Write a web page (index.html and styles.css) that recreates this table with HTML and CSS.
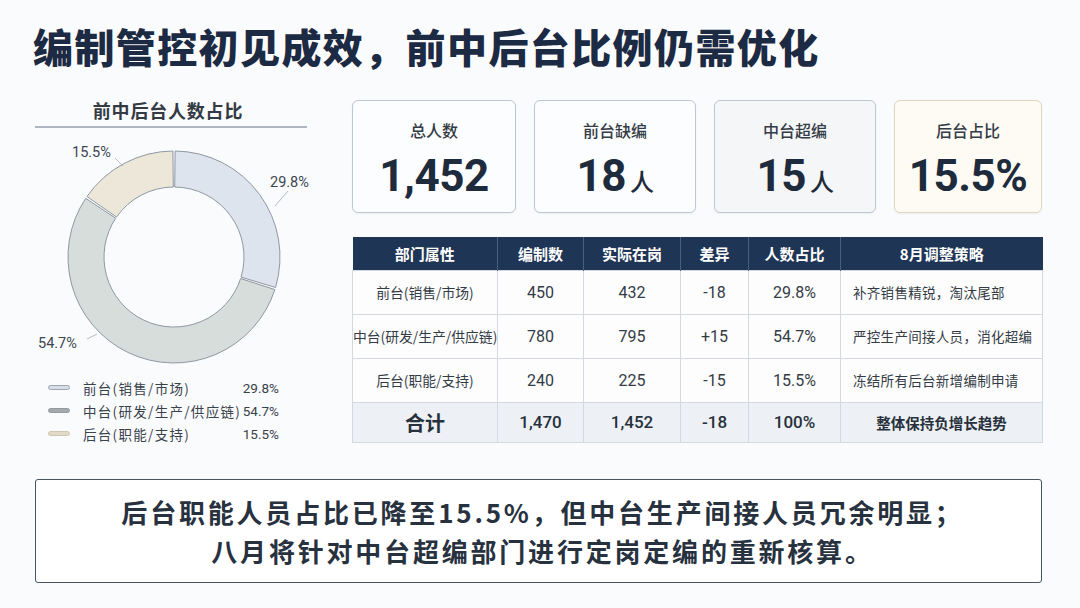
FILE: index.html
```html
<!DOCTYPE html>
<html lang="zh-CN">
<head>
<meta charset="utf-8">
<title>编制管控初见成效</title>
<link rel="stylesheet" href="styles.css">
</head>
<body>
<div class="page">
  <h1 class="title">编制管控初见成效，前中后台比例仍需优化</h1>
  <div class="main">
    <section class="chart-col">
      <div class="chart-title">前中后台人数占比</div>
      <svg class="donut" width="300" height="248" viewBox="0 0 300 248">
        <path class="seg seg-front" d="M140.11 23 A106 106 0 0 1 240.53 159.46 L206.05 149.12 A70 70 0 0 0 139.73 59 Z"/>
        <path class="seg seg-mid" d="M239.87 161.58 A106 106 0 1 1 50.71 70.34 L80.70 90.26 A70 70 0 1 0 205.61 150.52 Z"/>
        <path class="seg seg-back" d="M51.96 68.5 A106 106 0 0 1 137.89 23 L138.27 59 A70 70 0 0 0 81.52 89.05 Z"/>
        <line class="leader" x1="80" y1="30" x2="88" y2="38"/>
        <line class="leader" x1="240" y1="78" x2="253" y2="63"/>
        <line class="leader" x1="52" y1="211" x2="62" y2="206"/>
        <text class="plabel" x="37" y="29">15.5%</text>
        <text class="plabel" x="235" y="59">29.8%</text>
        <text class="plabel" x="3" y="220">54.7%</text>
      </svg>
      <ul class="legend">
        <li><span class="sw sw-front"></span><span class="lg-name">前台(销售/市场)</span><span class="lg-val">29.8%</span></li>
        <li><span class="sw sw-mid"></span><span class="lg-name">中台(研发/生产/供应链)</span><span class="lg-val">54.7%</span></li>
        <li><span class="sw sw-back"></span><span class="lg-name">后台(职能/支持)</span><span class="lg-val">15.5%</span></li>
      </ul>
    </section>
    <section class="data-col">
      <div class="cards">
        <div class="card"><div class="card-label">总人数</div><div class="card-value">1,452</div></div>
        <div class="card"><div class="card-label">前台缺编</div><div class="card-value">18<span class="unit">人</span></div></div>
        <div class="card card-grey"><div class="card-label">中台超编</div><div class="card-value">15<span class="unit">人</span></div></div>
        <div class="card card-cream"><div class="card-label">后台占比</div><div class="card-value">15.5%</div></div>
      </div>
      <table class="tbl">
        <colgroup>
          <col class="w1"><col class="w2"><col class="w3"><col class="w4"><col class="w5"><col class="w6">
        </colgroup>
        <thead>
          <tr><th>部门属性</th><th>编制数</th><th>实际在岗</th><th>差异</th><th>人数占比</th><th>8月调整策略</th></tr>
        </thead>
        <tbody>
          <tr><td>前台(销售/市场)</td><td>450</td><td>432</td><td>-18</td><td>29.8%</td><td class="strat">补齐销售精锐，淘汰尾部</td></tr>
          <tr><td>中台(研发/生产/供应链)</td><td>780</td><td>795</td><td>+15</td><td>54.7%</td><td class="strat">严控生产间接人员，消化超编</td></tr>
          <tr><td>后台(职能/支持)</td><td>240</td><td>225</td><td>-15</td><td>15.5%</td><td class="strat">冻结所有后台新增编制申请</td></tr>
          <tr class="total"><td class="total-name">合计</td><td>1,470</td><td>1,452</td><td>-18</td><td>100%</td><td class="total-strat">整体保持负增长趋势</td></tr>
        </tbody>
      </table>
    </section>
  </div>
  <div class="summary">
    <p>后台职能人员占比已降至15.5%，但中台生产间接人员冗余明显；</p>
    <p>八月将针对中台超编部门进行定岗定编的重新核算。</p>
  </div>
</div>
</body>
</html>
```
FILE: styles.css
```css
* { box-sizing: border-box; }
html, body {
  margin: 0;
  padding: 0;
  width: 1080px;
  height: 608px;
  overflow: hidden;
  background: #fafbfc;
  font-family: Roboto, "Noto Sans CJK SC", sans-serif;
  color: #2b3440;
}
.page {
  padding: 22px 38px 0 35px;
}
.title {
  margin: 0 0 0 -2px;
  font-family: "Noto Sans CJK SC", sans-serif;
  font-size: 40px;
  line-height: 48px;
  font-weight: 900;
  letter-spacing: 1.4px;
  color: #1c2a43;
}
.main {
  margin-top: 26px;
  display: grid;
  grid-template-columns: 272px 690px;
  column-gap: 45px;
  align-items: start;
}
.chart-col {
  width: 272px;
  overflow: visible;
}
.chart-title {
  width: 272px;
  text-align: center;
  font-family: "Noto Sans CJK SC", sans-serif;
  font-size: 18px;
  font-weight: 700;
  line-height: 28px;
  letter-spacing: 0.8px;
  padding-bottom: 2px;
  padding-right: 6px;
  color: #333a44;
  border-bottom: 2px solid #aeb7c0;
}
.donut {
  display: block;
  overflow: visible;
}
.seg {
  stroke: #8e98a3;
  stroke-width: 1;
}
.seg-front { fill: #dde4ee; }
.seg-mid { fill: #d7ddda; }
.seg-back { fill: #ede7da; }
.leader {
  stroke: #b5bcc3;
  stroke-width: 1;
}
.plabel {
  font-family: Roboto, sans-serif;
  font-size: 14.5px;
  fill: #3d4650;
}
.legend {
  list-style: none;
  margin: 0;
  padding: 0 0 0 13px;
  width: 244px;
}
.legend li {
  display: flex;
  align-items: center;
  height: 23px;
  font-size: 13.5px;
  color: #39414b;
}
.sw {
  width: 22px;
  height: 5px;
  border-radius: 3px;
  margin-right: 13px;
  flex: none;
}
.sw-front { background: #d6dce8; border: 1px solid #9da6b3; }
.sw-mid { background: #a3a9ad; border: 1px solid #959ca1; }
.sw-back { background: #e2dac6; border: 1px solid #cfc6b0; }
.lg-name {
  font-family: "Noto Sans CJK SC", sans-serif;
  letter-spacing: 1.3px;
  flex: 1;
  white-space: nowrap;
}
.lg-val {
  font-family: Roboto, sans-serif;
}
.data-col {
  margin-top: 4px;
}
.cards {
  display: grid;
  grid-template-columns: 164px 162px 162px 148px;
  column-gap: 18px;
}
.card {
  height: 113px;
  border: 1px solid #bfc6ce;
  border-radius: 6px;
  background: #fcfdfe;
  box-shadow: 0 1px 2px rgba(0, 0, 0, 0.05);
  display: flex;
  flex-direction: column;
  align-items: center;
  padding-top: 16px;
}
.card-grey { background: #f4f6f8; }
.card-cream { background: #fdfbf4; border-color: #ddd5c2; }
.card-label {
  font-family: "Noto Sans CJK SC", sans-serif;
  font-size: 16px;
  line-height: 26px;
  font-weight: 500;
  color: #343c46;
}
.card-value {
  margin-top: 8px;
  font-family: Roboto, "Noto Sans CJK SC", sans-serif;
  font-size: 44px;
  line-height: 50px;
  font-weight: 700;
  color: #1e2b3c;
  letter-spacing: -0.5px;
}
.unit {
  font-family: "Noto Sans CJK SC", sans-serif;
  font-size: 24px;
  font-weight: 500;
  margin-left: 4px;
}
.tbl {
  margin-top: 24px;
  width: 690px;
  border-collapse: collapse;
  table-layout: fixed;
  font-size: 14px;
}
.w1 { width: 145px; }
.w2 { width: 86px; }
.w3 { width: 97px; }
.w4 { width: 68px; }
.w5 { width: 92px; }
.w6 { width: 202px; }
.tbl th {
  height: 33px;
  background: #1f3555;
  color: #ffffff;
  font-family: "Noto Sans CJK SC", sans-serif;
  font-size: 15px;
  font-weight: 700;
  border-left: 1px solid #4a6080;
  padding: 0;
}
.tbl th:first-child { border-left: none; }
.tbl td {
  height: 44px;
  text-align: center;
  border: 1px solid #d3d9df;
  background: #fdfdfe;
  color: #333b45;
  padding: 0;
  font-size: 16px;
  white-space: nowrap;
}
.tbl td:first-child {
  font-family: "Noto Sans CJK SC", sans-serif;
  font-size: 13.8px;
  letter-spacing: 0;
}
.tbl td.strat {
  text-align: left;
  padding-left: 12px;
  font-family: "Noto Sans CJK SC", sans-serif;
  font-size: 13.5px;
  letter-spacing: 0.3px;
}
.tbl tr.total td {
  height: 40px;
  background: #edf0f4;
  font-size: 17px;
  font-weight: 500;
  color: #27303b;
}
.tbl tr.total td.total-name {
  font-size: 20px;
  font-weight: 700;
}
.tbl tr.total td.total-strat {
  font-family: "Noto Sans CJK SC", sans-serif;
  font-size: 14.5px;
  font-weight: 700;
}
.summary {
  margin-top: 34px;
  height: 104px;
  border: 1.5px solid #4a5461;
  border-radius: 3px;
  background: #ffffff;
  padding: 12px 0 0 8px;
  text-align: center;
}
.summary p {
  margin: 0;
  font-family: "Noto Sans CJK SC", sans-serif;
  font-size: 26px;
  line-height: 39px;
  font-weight: 700;
  letter-spacing: 2.8px;
  color: #28323f;
}
```
